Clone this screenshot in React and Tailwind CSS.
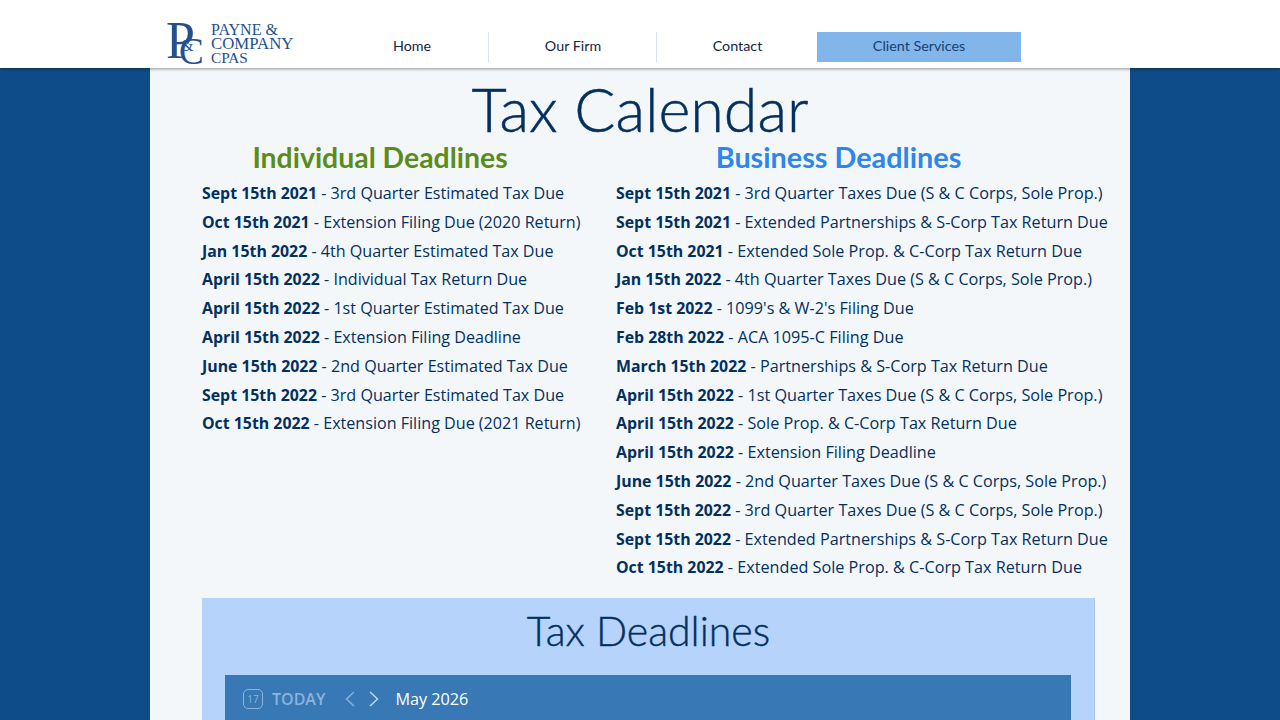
import React from 'react';

const individual = [
  ['Sept 15th 2021', '3rd Quarter Estimated Tax Due'],
  ['Oct 15th 2021', 'Extension Filing Due (2020 Return)'],
  ['Jan 15th 2022', '4th Quarter Estimated Tax Due'],
  ['April 15th 2022', 'Individual Tax Return Due'],
  ['April 15th 2022', '1st Quarter Estimated Tax Due'],
  ['April 15th 2022', 'Extension Filing Deadline'],
  ['June 15th 2022', '2nd Quarter Estimated Tax Due'],
  ['Sept 15th 2022', '3rd Quarter Estimated Tax Due'],
  ['Oct 15th 2022', 'Extension Filing Due (2021 Return)'],
];

const business = [
  ['Sept 15th 2021', '3rd Quarter Taxes Due (S & C Corps, Sole Prop.)'],
  ['Sept 15th 2021', 'Extended Partnerships & S-Corp Tax Return Due'],
  ['Oct 15th 2021', 'Extended Sole Prop. & C-Corp Tax Return Due'],
  ['Jan 15th 2022', '4th Quarter Taxes Due (S & C Corps, Sole Prop.)'],
  ['Feb 1st 2022', "1099's & W-2's Filing Due"],
  ['Feb 28th 2022', 'ACA 1095-C Filing Due'],
  ['March 15th 2022', 'Partnerships & S-Corp Tax Return Due'],
  ['April 15th 2022', '1st Quarter Taxes Due (S & C Corps, Sole Prop.)'],
  ['April 15th 2022', 'Sole Prop. & C-Corp Tax Return Due'],
  ['April 15th 2022', 'Extension Filing Deadline'],
  ['June 15th 2022', '2nd Quarter Taxes Due (S & C Corps, Sole Prop.)'],
  ['Sept 15th 2022', '3rd Quarter Taxes Due (S & C Corps, Sole Prop.)'],
  ['Sept 15th 2022', 'Extended Partnerships & S-Corp Tax Return Due'],
  ['Oct 15th 2022', 'Extended Sole Prop. & C-Corp Tax Return Due'],
];

function DeadlineList({ rows, size }) {
  return (
    <ul className={`font-['Open_Sans',sans-serif] ${size} leading-[28.8px] text-[#03305f] whitespace-nowrap`}>
      {rows.map(([date, label], i) => (
        <li key={i}>
          <span className="font-bold text-[15.87px]">{date}</span> - {label}
        </li>
      ))}
    </ul>
  );
}

function Logo() {
  return (
    <div className="flex items-center w-[128px] h-[44px] text-[#24508f] font-['Liberation_Serif',serif]">
      <div className="relative w-[44px] h-[44px] shrink-0">
        <span className="absolute left-[-1px] top-[-9px] text-[52px] leading-[56px]">P</span>
        <span className="absolute left-[12px] top-[11px] text-[37px] leading-[37px]">C</span>
        <span className="absolute left-[14px] top-[16px] text-[16px] leading-[16px]">&amp;</span>
      </div>
      <div className="leading-[14px] whitespace-nowrap mt-[-1px]">
        <div className="text-[16px]">PAYNE &amp;</div>
        <div className="text-[16.8px]">COMPANY</div>
        <div className="text-[15.3px]">CPAS</div>
      </div>
    </div>
  );
}

function NavItem({ label, width, divider }) {
  return (
    <div className={`flex items-center justify-center h-[30px] pb-[3px] pl-[1px] ${width} ${divider ? 'border-r border-[#d5e2ee]' : ''}`}>
      {label}
    </div>
  );
}

export default function App() {
  return (
    <div className="h-screen overflow-hidden bg-[#0d4c86] flex flex-col">
      <header className="relative z-10 h-[68px] shrink-0 bg-white shadow-[0_1px_3px_rgba(0,0,0,0.4)] flex pl-[167px] pt-[22px]">
        <Logo />
        <nav className="flex items-start pt-[10px] ml-[40px] font-['Lato',sans-serif] text-[14.3px] text-[#14263d]">
          <NavItem label="Home" width="w-[154px]" divider />
          <NavItem label="Our Firm" width="w-[168px]" divider />
          <NavItem label="Contact" width="w-[160px]" />
          <div className="w-[204px] h-[30px] pb-[3px] flex items-center justify-center bg-[#82b5ea] text-[#17406f]">
            Client Services
          </div>
        </nav>
      </header>

      <main className="mx-auto w-[980px] flex-1 bg-[#f3f7fa] flex flex-col">
        <h1 className="h-[70px] mt-[6px] text-center font-['Lato',sans-serif] font-light [-webkit-text-stroke:0.5px_#03305f] text-[61px] leading-[70px] text-[#03305f]">
          Tax Calendar
        </h1>
        <div className="flex mt-[-5px]">
          <div className="w-[466px] pl-[52px]">
            <h2 className="w-[356px] text-center font-['Lato',sans-serif] font-bold text-[28.4px] leading-[36px] text-[#5b8c1a]">
              Individual Deadlines
            </h2>
            <div className="mt-[4px]"><DeadlineList rows={individual} size="text-[16.13px]" /></div>
          </div>
          <div>
            <h2 className="w-[445px] text-center font-['Lato',sans-serif] font-bold text-[28.8px] leading-[36px] text-[#2f86ea]">
              Business Deadlines
            </h2>
            <div className="mt-[4px]"><DeadlineList rows={business} size="text-[16.19px]" /></div>
          </div>
        </div>

        <section className="ml-[52px] mt-[16px] w-[893px] flex-1 bg-[#b6d4fb] border-r border-[#a9c9ef]">
          <h2 className="mt-[8px] ml-[1px] text-center font-['Lato',sans-serif] font-light [-webkit-text-stroke:0.4px_#03305f] text-[41px] leading-[50px] text-[#03305f]">
            Tax Deadlines
          </h2>
          <div className="mt-[19px] ml-[23px] w-[846px] h-[60px] bg-[#3778b5] flex items-center pl-[18px] pb-[12px] font-['Open_Sans',sans-serif]">
            <div className="w-[20px] h-[20px] rounded-[5px] border border-[#8ab4dc] flex items-center justify-center text-[10px] text-[#8ab4dc]">
              17
            </div>
            <span className="ml-[9px] text-[16px] font-semibold text-[#8ab4dc]">TODAY</span>
            <svg className="ml-[20px] w-[10px] h-[16px]" viewBox="0 0 10 16" fill="none" stroke="#8ab4dc" strokeWidth="1.4">
              <path d="M9 1 1.5 8 9 15" />
            </svg>
            <svg className="ml-[14px] w-[10px] h-[16px]" viewBox="0 0 10 16" fill="none" stroke="#c4dbf0" strokeWidth="1.4">
              <path d="M1 1 8.5 8 1 15" />
            </svg>
            <span className="ml-[16px] text-[16.2px] font-medium text-white">May 2026</span>
          </div>
        </section>
      </main>
    </div>
  );
}
